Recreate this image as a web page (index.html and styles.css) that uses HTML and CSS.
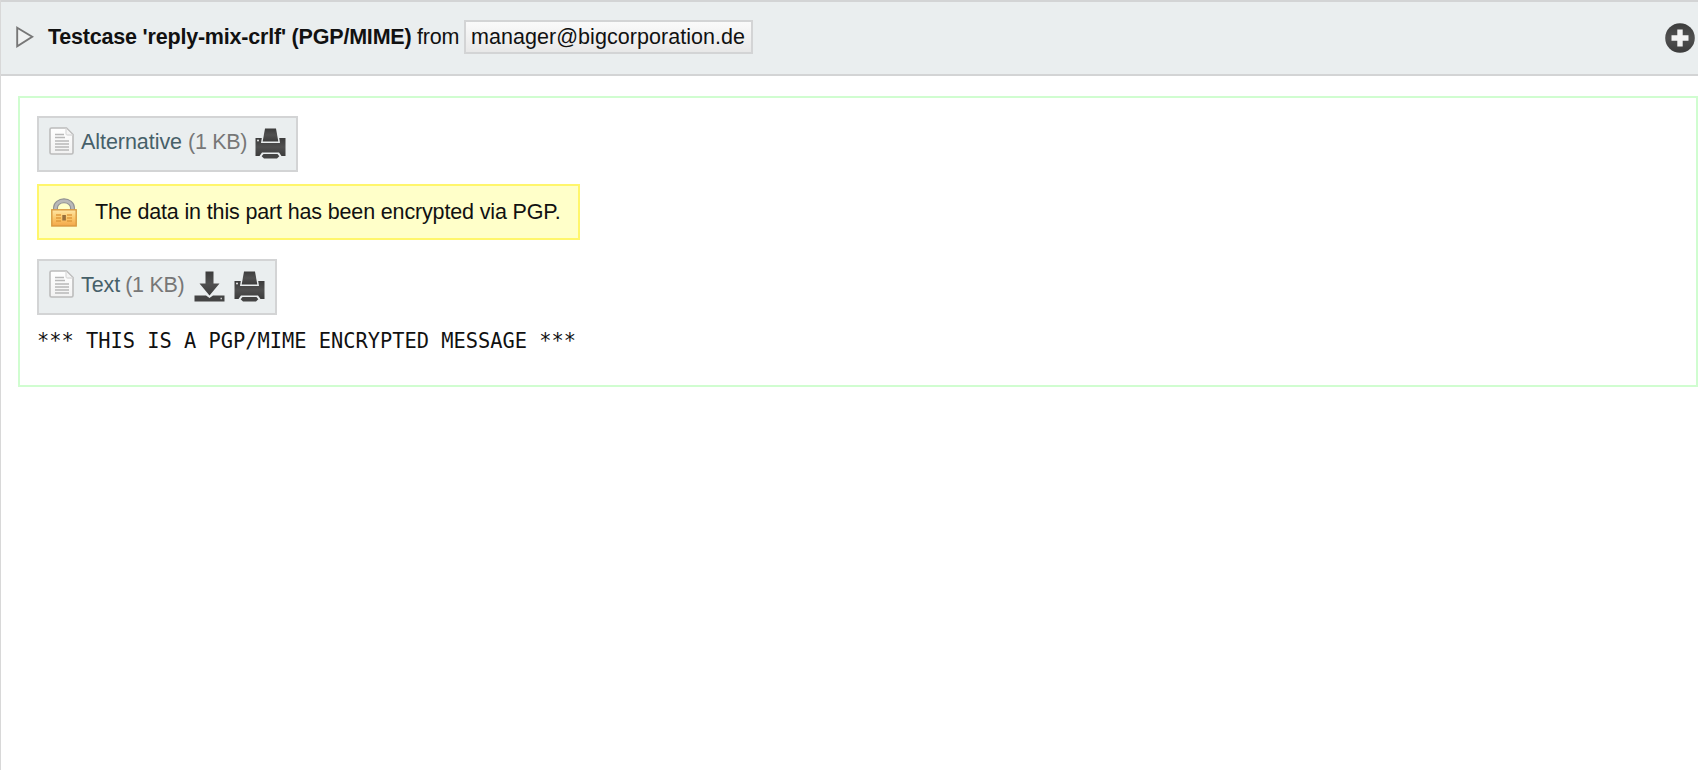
FILE: index.html
```
<!DOCTYPE html>
<html lang="en">
<head>
<meta charset="utf-8">
<title>Testcase 'reply-mix-crlf' (PGP/MIME)</title>
<link rel="stylesheet" href="styles.css">
</head>
<body>
<svg class="defs" width="0" height="0" aria-hidden="true">
  <defs>
    <linearGradient id="paper" x1="0" y1="0" x2="0" y2="1"><stop offset="0" stop-color="#fff"/><stop offset="1" stop-color="#f2f2f2"/></linearGradient>
    <linearGradient id="gold" x1="0" y1="0" x2="0" y2="1"><stop offset="0" stop-color="#ffe7a6"/><stop offset=".5" stop-color="#fbc96c"/><stop offset="1" stop-color="#f3a64a"/></linearGradient>
    <linearGradient id="dark" x1="0" y1="0" x2="0" y2="1"><stop offset="0" stop-color="#3c3c3c"/><stop offset=".5" stop-color="#505050"/><stop offset="1" stop-color="#3c3c3c"/></linearGradient>
    <symbol id="doc" viewBox="0 0 25 28">
      <path d="M2.5 1H17.5L24 7.5V25.5Q24 27 22.500 27H2.500Q1 27 1 25.500V2.500Q1 1 2.500 1Z" fill="url(#paper)" stroke="#bcbcbc" stroke-width="1.6"/>
      <path d="M17 1.500V6.500Q17 8 18.500 8H23.500" fill="#f4f4f4" stroke="#dcdcdc" stroke-width="1.300"/>
      <path d="M6 7.500H15M6 10.500H16M6 14H20M6 17H20M6 20H20M6 23H20" stroke="#b8b8b8" stroke-width="1.400"/>
    </symbol>
    <symbol id="print" viewBox="0 0 31 31">
      <path d="M10 .500H21L23.300 13.500H7.700Z" fill="url(#dark)"/>
      <path d="M.500 10H6.800L6 15H25L24.200 10H30.500V28H26.500L24 24.500H7L4.500 28H.500Z" fill="url(#dark)"/>
      <path d="M8.500 26H22.500L24.300 28.300L22 30.500H9L6.700 28.300Z" fill="#444"/>
      <circle cx="3" cy="12.500" r="1" fill="#e8e8e8"/>
    </symbol>
    <symbol id="down" viewBox="0 0 31 31">
      <path d="M11.500 .500H19.500V12.500H25.500L15.500 24.500L5.500 12.500H11.500Z" fill="url(#dark)"/>
      <path d="M.500 24.500H12L15.500 27L19 24.500H30.500V30.500H.500Z" fill="#444"/>
      <path d="M26.500 27.500H28" stroke="#ccc" stroke-width="1.300"/>
    </symbol>
  </defs>
</svg>
<div class="page">
  <header class="head">
    <svg class="tri" viewBox="0 0 18 22"><path d="M1.200 1.700L16.200 10.700L1.200 20.300Z" fill="#f0f2f2" stroke="#777" stroke-width="1.900"/></svg>
    <strong class="subject">Testcase 'reply-mix-crlf' (PGP/MIME)</strong>
    <span class="from">from</span>
    <span class="address">manager@bigcorporation.de</span>
    <svg class="add" viewBox="0 0 30 30"><circle cx="15" cy="15" r="14.800" fill="url(#dark)"/><path d="M12.300 6.500H17.700V12.300H23.500V17.700H17.700V23.500H12.300V17.700H6.500V12.300H12.300Z" fill="#f3f3f3"/></svg>
  </header>
  <main class="message">
    <div class="part part-alt">
      <svg class="doc"><use href="#doc"/></svg>
      <a class="name">Alternative</a><span class="size">(1 KB)</span>
      <svg class="action print-alt"><use href="#print"/></svg>
    </div>
    <div class="notice">
      <svg class="lock" viewBox="0 0 26 29">
        <path d="M4.500 12V9.800A8.500 7 0 0 1 21.500 9.800V12" fill="none" stroke="#929292" stroke-width="5"/>
        <path d="M4.500 12V9.800A8.500 7 0 0 1 21.500 9.800V12" fill="none" stroke="#b9b9b9" stroke-width="2.800"/>
        <rect x=".800" y="11.800" width="24.400" height="16.200" fill="url(#gold)" stroke="#d99a40" stroke-width="1.400"/>
        <path d="M5 17H10M5 20H10M5 23H10M16 17H21M16 20H21M16 23H21" stroke="#e09a3c" stroke-width="1.300"/>
        <rect x="11.300" y="17" width="3.600" height="5.500" fill="#98703c"/>
      </svg>
      <span class="notice-text">The data in this part has been encrypted via PGP.</span>
    </div>
    <div class="part part-text">
      <svg class="doc"><use href="#doc"/></svg>
      <a class="name">Text</a><span class="size size-text">(1 KB)</span>
      <svg class="action"><use href="#down"/></svg>
      <svg class="action"><use href="#print"/></svg>
    </div>
    <pre class="body">*** THIS IS A PGP/MIME ENCRYPTED MESSAGE ***</pre>
  </main>
</div>
</body>
</html>
```
FILE: styles.css
```
* { box-sizing: border-box; }
body { margin: 0; background: #fff; font: 21.5px/26px "Liberation Sans", Arial, sans-serif; color: #111; overflow: hidden; }
svg { display: block; flex: none; }
.defs { position: absolute; }
.page { height: 770px; border-left: 1px solid #d8d8d8; }
.head { display: flex; align-items: flex-start; height: 76px; padding: 18px 3px 0 15px; background: #eaeeef; border-top: 2px solid #d3d4d5; border-bottom: 2px solid #d3d4d5; white-space: nowrap; }
.tri { width: 18px; height: 22px; margin-top: 6px; }
.subject { width: 363px; margin: 4px 0 0 14px; letter-spacing: -.2px; }
.from { width: 42px; margin: 4px 0 0 6px; letter-spacing: -.2px; }
.address { width: 289px; height: 34px; margin-left: 5px; padding: 2px 5px 0; line-height: 26px; letter-spacing: .05px; background: linear-gradient(#fafafa, #e8e8e8); border: 2px solid #d3d4d5; }
.add { width: 30px; height: 30px; margin: 3px 0 0 auto; }
.message { display: flex; flex-direction: column; align-items: flex-start; height: 291px; margin: 20px 0 0 17px; padding: 18px 17px; border: 2px solid #d0fdd0; }
.part, .notice { display: flex; align-items: flex-start; height: 56px; border: 2px solid #d3d4d5; background: #eaeeef; white-space: nowrap; padding: 10px; }
.part-alt { width: 261px; }
.doc { width: 25px; height: 28px; margin-top: -1px; }
.name { margin: 1px 0 0 7px; color: #466069; letter-spacing: -.05px; }
.size { width: 59px; margin: 1px 0 0 6px; color: #777; letter-spacing: -.3px; }
.size-text { margin-left: 5px; }
.action { width: 31px; height: 31px; margin-left: 10px; }
.action + .action { margin-left: 9px; }
.print-alt { margin-left: 8px; }
.notice { width: 543px; margin-top: 12px; padding: 12px; background: #ffffc9; border-color: #fff66c; }
.lock { width: 26px; height: 29px; }
.notice-text { margin: 1px 0 0 18px; letter-spacing: -.15px; }
.part-text { width: 240px; margin-top: 19px; }
.body { margin: 13px 0 0; font: 20.35px/26px "DejaVu Sans Mono", monospace; }
```
